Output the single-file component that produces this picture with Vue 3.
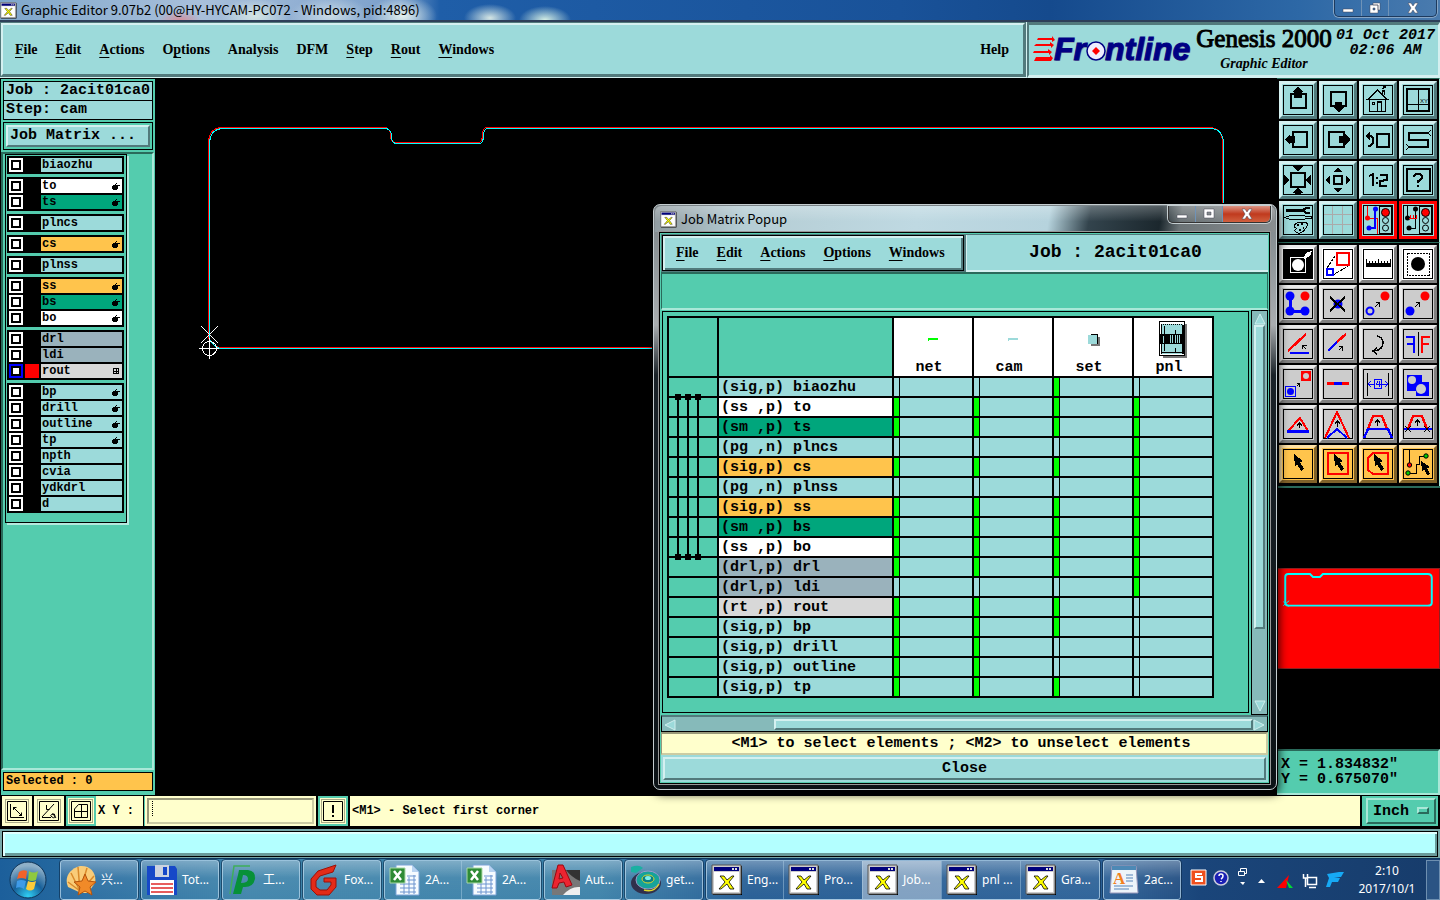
<script setup>
import { ref } from "vue";

const menus = [
  { label: "File", key: 0 },
  { label: "Edit", key: 0 },
  { label: "Actions", key: 0 },
  { label: "Options", key: 1 },
  { label: "Analysis", key: -1 },
  { label: "DFM", key: -1 },
  { label: "Step", key: 0 },
  { label: "Rout", key: 0 },
  { label: "Windows", key: 0 },
];

const popupMenus = ["File", "Edit", "Actions", "Options", "Windows"];

// layer groups of the side list, mark is the small sign at the right
const layerGroups = [
  [{ name: "biaozhu", tone: "signal" }],
  [
    { name: "to", tone: "silk", mark: "hand" },
    { name: "ts", tone: "mask", mark: "hand" },
  ],
  [{ name: "plncs", tone: "signal" }],
  [{ name: "cs", tone: "outer", mark: "hand" }],
  [{ name: "plnss", tone: "signal" }],
  [
    { name: "ss", tone: "outer", mark: "hand" },
    { name: "bs", tone: "mask", mark: "hand" },
    { name: "bo", tone: "silk", mark: "hand" },
  ],
  [
    { name: "drl", tone: "drill" },
    { name: "ldi", tone: "drill" },
    { name: "rout", tone: "rout", mark: "grid", active: true },
  ],
  [
    { name: "bp", tone: "signal", mark: "hand" },
    { name: "drill", tone: "signal", mark: "hand" },
    { name: "outline", tone: "signal", mark: "hand" },
    { name: "tp", tone: "signal", mark: "hand" },
    { name: "npth", tone: "signal" },
    { name: "cvia", tone: "signal" },
    { name: "ydkdrl", tone: "signal" },
    { name: "d", tone: "signal" },
  ],
];

const steps = ["net", "cam", "set", "pnl"];

// has: one flag for each step
const matrix = [
  { type: "(sig,p)", name: "biaozhu", tone: "signal", has: [0, 0, 1, 0] },
  { type: "(ss ,p)", name: "to", tone: "silk", has: [1, 1, 1, 1] },
  { type: "(sm ,p)", name: "ts", tone: "mask", has: [1, 1, 1, 1] },
  { type: "(pg ,n)", name: "plncs", tone: "signal", has: [0, 0, 0, 1] },
  { type: "(sig,p)", name: "cs", tone: "outer", has: [1, 1, 1, 1] },
  { type: "(pg ,n)", name: "plnss", tone: "signal", has: [0, 0, 0, 1] },
  { type: "(sig,p)", name: "ss", tone: "outer", has: [1, 1, 1, 1] },
  { type: "(sm ,p)", name: "bs", tone: "mask", has: [1, 1, 1, 1] },
  { type: "(ss ,p)", name: "bo", tone: "silk", has: [1, 1, 1, 1] },
  { type: "(drl,p)", name: "drl", tone: "drill", has: [1, 1, 1, 1] },
  { type: "(drl,p)", name: "ldi", tone: "drill", has: [0, 0, 0, 1] },
  { type: "(rt ,p)", name: "rout", tone: "rout", has: [1, 1, 1, 0] },
  { type: "(sig,p)", name: "bp", tone: "signal", has: [1, 1, 1, 0] },
  { type: "(sig,p)", name: "drill", tone: "signal", has: [1, 1, 0, 0] },
  { type: "(sig,p)", name: "outline", tone: "signal", has: [1, 1, 0, 0] },
  { type: "(sig,p)", name: "tp", tone: "signal", has: [1, 1, 1, 0] },
];

// board contour, drawn once per colour
const contour =
  "M54.500 262V64q1-12 12-13.500h163q7 0 7 8t7 7h80q5 0 5-8t6-7h722q11 1 12 14v198q-1 8-11 8H66q-5 0-11-8";

const light = `<path d="M16.500 1.500h12v27h-12z" fill="none" stroke="#000"/><circle cx="22.500" cy="7.500" r="4" fill="red" stroke="#000"/><circle cx="22.500" cy="15.500" r="3" fill="none" stroke="#000"/><circle cx="22.500" cy="23" r="3" fill="none" stroke="#000"/>`;
const cursor = `<path d="M11 5l9 7-3 1 4 7-3 2-4-7-2 3z"/>`;
const k = `fill="none" stroke="#000"`;

const viewTools = [
  { name: "Pan up", art: `<path d="M8 9h15v14H8z" ${k} stroke-width="2"/><path d="M15 2l6 5h-2v6h-8V7H9z"/>` },
  { name: "Pan down", art: `<path d="M8 7h15v14H8z" ${k} stroke-width="2"/><path d="M12 17h7v5h2l-5 5h-1l-5-5h2z"/>` },
  { name: "Home", art: `<path d="M4.500 14.500L14.500 5l10 9.500zM6.500 14.500v12h16v-12M14.500 26v-9h4v9M9.500 17.500h2v2h-2zM19.500 9V6h2v4M20 4l1-2h2" ${k} stroke-width="1.4"/>` },
  { name: "Zoom XY", art: `<path d="M4 4h22v22H4z" ${k} stroke-width="2"/><path d="M15.500 4v22M4 19.500h22" ${k}/><text x="17" y="18" font-size="6" font-family="Liberation Sans">XY</text>` },
  { name: "Pan left", art: `<path d="M10 7h14v15H10z" ${k} stroke-width="2"/><path d="M2 14l5-5v2h5v7H7v2l-5-5z"/>` },
  { name: "Pan right", art: `<path d="M6 7h15v15H6z" ${k} stroke-width="2"/><path d="M27 14l-5-5v2h-6v7h6v2l5-5z"/>` },
  { name: "Previous view", art: `<path d="M14 9h12v13H14z" ${k} stroke-width="2"/><path d="M5 11h3q2 1 2 4v2q-1 4-5 4" ${k} stroke-width="2.4"/><path d="M2 11l5-4v8z"/>` },
  { name: "Serpentine", art: `<path d="M25 8H6v7h19v7H6" ${k} stroke-width="2"/><path d="M28 5l-3 3 3 3M3 19l3 3-3 3" ${k}/>` },
  { name: "Zoom in", art: `<path d="M8 8h14v14H8z" ${k} stroke-width="2"/><path d="M9 1h3l3-1 3 1h3l-6 5zM9 28l6-5 6 5-6 1zM1 9v12l5-6zM28 9v12l-5-6z"/>` },
  { name: "Zoom out", art: `<path d="M11 11h8v8h-8z" ${k} stroke-width="2"/><path d="M15 3l5 4H10zM15 27l5-4H10zM3 15l4-5v10zM27 15l-4-5v10z"/>` },
  { name: "Scale one to two", art: `<path d="M6 11l4-2v12M14 12v2M14 17v2M17 10h7v5l-7 1v5h7" ${k} stroke-width="2"/>` },
  { name: "Help on tool", art: `<path d="M4 4h23v22H4z" ${k} stroke-width="2"/><path d="M11 12q0-3 4-3t4 3q0 3-4 4v2M15 20v2" ${k} stroke-width="2"/>` },
  { name: "Options", art: `<path d="M3 5h17" ${k} stroke-width="3"/><path d="M27 3h-4l-3 2 3 3h4" ${k} stroke-width="2"/><path d="M2 12.500l5-2h14l2 1h5v2h-5l-2 1H7z" ${k}/><path d="M11 22q0-5 8-5t4 6-8 5-3-3q3-2-1-3z" ${k}/><path d="M14 20h2M18 19h2M20 23h1M16 25h2" ${k} stroke-width="2"/>` },
  { name: "Grid", art: `<path d="M9.500 1v28M19.500 1v28M1 9.500h28M1 19.500h28" fill="none" stroke="#aaa"/>` },
  { name: "Net check", tone: "alert", art: `<path d="M4.500 1v12h10v16" fill="none" stroke="red"/><circle cx="4.500" cy="13" r="2.500" fill="red"/><path d="M12 4v19H6" fill="none" stroke="#00f" stroke-width="1.4"/><circle cx="12.500" cy="4" r="2.500" fill="#00f"/><circle cx="6" cy="23" r="2.500" fill="#00f"/>${light}` },
  { name: "Connection check", tone: "alert", art: `<path d="M4.500 1v12M12.500 4v19H6" ${k}/><circle cx="4.500" cy="13" r="2.500"/><circle cx="12.500" cy="4" r="2.500"/><circle cx="6" cy="23" r="2.500"/><path d="M6 13.500h8M7.500 13v-3M10.500 13v-3M13.500 13v-3" fill="none" stroke="red"/>${light}` },
];

const editTools = [
  { name: "Feature zoom", tone: "bright", art: `<path d="M0 0h30v30H0z"/><path d="M7.500 8.500h15v15h-15z" fill="none" stroke="#fff"/><circle cx="15" cy="16" r="6" fill="#fff"/><path d="M20 9l4-6 5-1-2 5-5 3z" fill="#fff"/>` },
  { name: "Scale", tone: "bright", art: `<path d="M4 19L14 4M10 26l17-10" ${k} stroke-dasharray="3 1"/><path d="M14 4h12v12H14z" fill="none" stroke="red" stroke-width="2"/><path d="M4 20h6v6H4z" fill="none" stroke="#00f" stroke-width="2"/>` },
  { name: "Measure", tone: "bright", art: `<path d="M3 14h25v4H3z"/><path d="M3.500 14v-4M6.500 14v-2M9.500 14v-2M12.500 14v-2M15.500 14v-4M18.500 14v-2M21.500 14v-2M24.500 14v-2M27.500 14v-4" ${k}/>` },
  { name: "Select shape", tone: "bright", art: `<path d="M4.500 4.500h22v22h-22z" ${k} stroke-dasharray="2 1"/><circle cx="15" cy="15" r="7"/>` },
  { name: "Chain", art: `<path d="M7 7v15h15" fill="none" stroke="#00f" stroke-width="3"/><circle cx="7" cy="7" r="4.500" fill="#00f"/><circle cx="7" cy="22" r="4.500" fill="#00f"/><circle cx="22" cy="22" r="4.500" fill="#00f"/><circle cx="22" cy="7" r="4.500" fill="red"/>` },
  { name: "Delete", art: `<circle cx="15" cy="15" r="4.500" fill="#00f"/><path d="M7 8l15 14M22 8L7 22" ${k} stroke-width="2"/>` },
  { name: "Move", art: `<circle cx="7" cy="22" r="3.500" fill="none" stroke="#00f" stroke-width="2"/><circle cx="22" cy="7" r="4.500" fill="red"/><path d="M12 18l5-5M13 13.500h3.500v4" ${k}/>` },
  { name: "Copy", art: `<circle cx="7" cy="22" r="4.500" fill="#00f"/><circle cx="22" cy="7" r="4.500" fill="red"/><path d="M12 18l5-5M13 13.500h3.500v4" ${k}/>` },
  { name: "Rotate line", art: `<path d="M5 22L23 5" stroke="red" stroke-width="2.400"/><path d="M7 24h19" stroke="#00f" stroke-width="2"/><path d="M23 20l-3-3M19.500 20v-3.500h4" ${k}/>` },
  { name: "Extend line", art: `<path d="M5 22l9-9" stroke="#00f" stroke-width="2.400"/><path d="M14 13l9-8" stroke="red" stroke-width="2.400"/><path d="M16 21l4-4M16 17.500h3.500v4" ${k}/>` },
  { name: "Rotate", art: `<path d="M14 7q6 1 6 7 0 7-9 8M14 19l-4 3 4 3" ${k} stroke-width="1.500"/>` },
  { name: "Mirror", art: `<path d="M3 8h8v16M4 15h7" fill="none" stroke="#00f" stroke-width="2"/><path d="M27 8h-8v16M26 15h-7" fill="none" stroke="red" stroke-width="2"/><path d="M15.500 3v24" ${k}/>` },
  { name: "Replace", art: `<path d="M18 2h10v10H18z" fill="red"/><circle cx="23" cy="7" r="3" fill="#ccc"/><path d="M2.500 17.500h10v10h-10z" fill="none" stroke="#00f"/><circle cx="7.500" cy="22.500" r="3.500" fill="#00f"/><path d="M14 17l3-3M14 14.500h2.500v3" ${k}/>` },
  { name: "Break", art: `<path d="M4 14.500h22" stroke="red" stroke-width="3"/><path d="M11 14.500h8" stroke="#00f" stroke-width="3"/>` },
  { name: "Spacing", art: `<path d="M4.500 4v23M25.500 4v23" ${k}/><path d="M11.500 10.500h7v9h-7zM5 15.500h6M19 15.500h6M8 12l-3 3 3 3M22 12l3 3-3 3M14.500 12l-1 3.500h4M16.500 12v6" fill="none" stroke="#00f"/>` },
  { name: "Merge", art: `<path d="M4 6h15v7h7v14H13v-5H4z" fill="#00f"/><circle cx="9" cy="11" r="4" fill="#ccc"/><circle cx="18" cy="20" r="5" fill="#ccc"/>` },
  { name: "Move triangle", art: `<path d="M5 22L17 9l8 13" fill="none" stroke="red" stroke-width="2"/><path d="M4 22.500h22" stroke="#00f" stroke-width="3"/><path d="M16.500 19v-5M14 16.500l2.500-2.500 2.500 2.500" ${k}/>` },
  { name: "Move corner", art: `<path d="M2 29L14 3l12 26" fill="none" stroke="red" stroke-width="2"/><path d="M4 29l10-9 10 9" fill="none" stroke="#00f" stroke-width="2"/><path d="M14.500 18v-6M12 14.500l2.500-2.500 2.500 2.500" ${k} stroke-width="1.400"/>` },
  { name: "Move segment", art: `<path d="M5 20l5-13h9l5 13" fill="none" stroke="red" stroke-width="2.400"/><path d="M1 29l4-9h20l4 9" fill="none" stroke="#00f" stroke-width="2.400"/><path d="M14.500 17v-6M12 13.500l2.500-2.500 2.500 2.500" ${k} stroke-width="1.400"/>` },
  { name: "Trim segment", art: `<path d="M5 20l5-13h9l5 13" fill="none" stroke="red" stroke-width="2.400"/><path d="M1 20h28" stroke="#00f" stroke-width="2"/><path d="M14.500 17v-6M12 13.500l2.500-2.500 2.500 2.500M2 17l6 6M8 17l-6 6M21 17l6 6M27 17l-6 6" ${k}/>` },
  { name: "Select", tone: "pick", art: cursor },
  { name: "Select by frame", tone: "pick", art: `<path d="M5 4h20v21H5z" fill="none" stroke="red" stroke-width="2"/>${cursor}` },
  { name: "Select by polygon", tone: "pick", art: `<path d="M10 4h15v21H10l-5-4V9z" fill="none" stroke="red" stroke-width="2"/>${cursor}` },
  { name: "Select net", tone: "pick", art: `<path d="M6.500 1v14M5 24.500h8.500v-9h3v-8H23" ${k}/><circle cx="6.500" cy="16" r="2.200" fill="red" stroke="#000"/><circle cx="5" cy="24" r="2.200" fill="#0c0" stroke="#000"/><circle cx="23" cy="7" r="2.200" fill="#0c0" stroke="#000"/><path d="M18 12l9 6-3 1 3 6-3 1-3-6-2 2z"/>` },
];

const toolSets = [
  { id: "view", tools: viewTools },
  { id: "edit", tools: editTools },
];

const tasks = [
  [{ icon: "shell", label: "兴..." }],
  [{ icon: "disk", label: "Tot..." }],
  [{ icon: "green-p", label: "工..." }],
  [{ icon: "foxit", label: "Fox..." }],
  [{ icon: "sheet", label: "2A..." }, { icon: "sheet", label: "2A..." }],
  [{ icon: "cad", label: "Aut..." }],
  [{ icon: "disc", label: "get..." }],
  [
    { icon: "xwin", label: "Eng..." },
    { icon: "xwin", label: "Pro..." },
    { icon: "xwin", label: "Job...", on: true },
    { icon: "xwin", label: "pnl ..." },
    { icon: "xwin", label: "Gra..." },
  ],
  [{ icon: "note", label: "2ac..." }],
];

const coords = ref("");
const unit = ref("Inch");
</script>

<template>
  <div class="desktop">
    <!-- shared icons -->
    <svg class="defs" width="0" height="0" aria-hidden="true">
      <symbol id="xwin" viewBox="0 0 32 32">
        <path d="M2 2h29v29H2z" fill="#000" />
        <path d="M1 1h29v29H1z" fill="#ccc" stroke="#555" />
        <path d="M3 3h25v4H3z" fill="#00007c" />
        <path d="M21 4h2v2h-2zM24 4h2v2h-2z" fill="#ddd" />
        <path d="M3 8h25v20H3z" fill="#fff" />
        <path d="M9 12h4l3 4 5-4h2l-5 6 5 7h-4l-3-5-6 5H8l6-7z" fill="#ff0" stroke="#000" stroke-width="0.8" />
      </symbol>
      <symbol id="shell" viewBox="0 0 32 32">
        <path d="M16 29L3 23C-1 14 4 5 15 2c11-1 17 8 15 17l-7 10z" fill="#f9cc78" />
        <path d="M15 27L3 18M15 27L6 9M15 27L13 3M15 27L22 4M16 27L29 12" stroke="#d98a2b" stroke-width="1.5" />
        <path d="M20 10l3 7 8 1-6 5 2 8-7-4-7 4 2-8-6-5 8-1z" fill="#f18a28" stroke="#b4530d" />
      </symbol>
      <symbol id="disk" viewBox="0 0 32 32">
        <path d="M1 2h28l2 3v26H1z" fill="#1648c8" />
        <path d="M9 1h14v12H9z" fill="#ccd3df" />
        <path d="M17 3h4v8h-4z" fill="#1648c8" />
        <path d="M4 16h24v15H4z" fill="#fff" />
        <path d="M5 20h22M5 24h22M5 28h22" stroke="#e02828" stroke-width="1.5" />
      </symbol>
      <symbol id="green-p" viewBox="0 0 32 32">
        <path d="M23 2H7L3 30" stroke="#3fae5a" stroke-width="1.5" fill="none" />
        <path d="M12 6h9q8 1 7 9-2 9-12 8l-2 7H6l5-19h5l-2 8q7 0 7-4t-5-4h-5z" fill="#079138" />
      </symbol>
      <symbol id="foxit" viewBox="0 0 32 32">
        <path d="M28 1L10 7 3 15v10l6 6h12l7-8V14H16v4h7v3l-4 5h-7l-4-3v-6l4-5 13-4z" fill="#e32b18" stroke="#9c1108" />
      </symbol>
      <symbol id="sheet" viewBox="0 0 32 32">
        <path d="M7 1h16l7 7v23H7z" fill="#f6fbff" stroke="#7ca4d8" />
        <path d="M23 1v7h7z" fill="#b9d3f1" />
        <path d="M11 20h16M11 24h16M11 28h16M15 17v13M20 13v17M25 11v19M18 12h9M18 16h9" stroke="#6c94cf" />
        <path d="M1 4h15v15H1z" fill="#2f8b36" stroke="#a9d9a4" />
        <path d="M5 7l7 9M12 7l-7 9" stroke="#fff" stroke-width="2.5" />
      </symbol>
      <symbol id="cad" viewBox="0 0 32 32">
        <path d="M3 6h28v25H3z" fill="#777" />
        <path d="M17 6h14v11q-9-4-14-11z" fill="#333" />
        <path d="M14 31h17v-8q-9-1-17 8z" fill="#eee" />
        <path d="M9 1h5l9 20-6 2-2-5-5 1-2 5H3zM11 9l-1 6 4-1z" fill="#ec2430" fill-rule="evenodd" stroke="#9a0810" />
      </symbol>
      <symbol id="disc" viewBox="0 0 32 32">
        <ellipse cx="16" cy="19" rx="15" ry="11" fill="#30304c" />
        <ellipse cx="18" cy="16" rx="12" ry="9" fill="#16a39a" stroke="#99c" />
        <ellipse cx="18" cy="15" rx="6" ry="4" fill="#0c7d84" stroke="#e0d62c" />
        <ellipse cx="18" cy="14" rx="3" ry="2" fill="#7df0ea" />
        <path d="M1 3q8-3 12 1l-7 5-5-1z" fill="#1bb0a2" />
        <path d="M14 26q10 3 15-6" stroke="#e0d62c" stroke-width="1.5" fill="none" />
      </symbol>
      <symbol id="hand" viewBox="0 0 8 8">
        <path d="M0 4h1V3h2V2h1V1h1v1h-1v1h4v1H6v3H5v1H1V7H0z" />
      </symbol>
      <symbol id="grid" viewBox="0 0 8 8">
        <path d="M1.500 1.500h5v5h-5zM4 1v6M1 4h6" fill="none" stroke="#000" />
      </symbol>
    </svg>

    <header class="title-bar">
      <svg class="title-icon"><use href="#xwin" /></svg>
      <h1>Graphic Editor 9.07b2 (00@HY-HYCAM-PC072 - Windows, pid:4896)</h1>
      <div class="window-buttons">
        <button aria-label="Minimize"><svg width="12" height="12"><path d="M1 7h10v3H1z" /></svg></button>
        <button aria-label="Restore"><svg width="12" height="12"><path d="M4 1h7v7h-2V3H4zM1 3h8v8H1zM4 6v2h2V6z" fill-rule="evenodd" /></svg></button>
        <button class="close" aria-label="Close window"><svg width="12" height="12"><path d="M1 1h3l2 3 2-3h3L8 6l3 5H8L6 8l-2 3H1l3-5z" /></svg></button>
      </div>
    </header>

    <div class="menu-row">
      <nav class="menu-bar">
        <button v-for="m in menus" :key="m.label">
          <template v-if="m.key < 0">{{ m.label }}</template>
          <template v-else>{{ m.label.slice(0, m.key) }}<u>{{ m.label[m.key] }}</u>{{ m.label.slice(m.key + 1) }}</template>
        </button>
        <button class="help">Help</button>
      </nav>
      <div class="brand">
        <svg class="logo" viewBox="0 0 162 40" role="img" aria-label="Frontline">
          <path d="M5 9h14V7l3 4-3 2v-2H4zM3 15h14v-2l4 3-3 3v-2H1zM1 22h14v-2l4 3-3 3v-2H0zM3 28h14v-2l3 3-2 3H1z" fill="red" />
          <g font-family="Liberation Sans" font-weight="bold" font-style="italic" font-size="32">
            <text x="22" y="32" fill="#889">Fr</text>
            <text x="73" y="32" fill="#889">ntline</text>
            <text x="21" y="31" fill="#000084" stroke="#000084">Fr</text>
            <text x="72" y="31" fill="#000084" stroke="#000084">ntline</text>
          </g>
          <circle cx="63" cy="22" r="9" fill="#eef" stroke="#000084" stroke-width="1.5" />
          <path d="M63 18l4 4-4 4-4-4z" fill="red" />
        </svg>
        <div class="product">
          <strong>Genesis 2000</strong>
          <em>Graphic Editor</em>
        </div>
        <div class="stamp">01 Oct 2017<br />02:06 AM</div>
      </div>
    </div>

    <main class="work">
      <aside class="side">
        <div class="job-info">
          <div>Job : 2acit01ca0</div>
          <div>Step: cam</div>
        </div>
        <div class="matrix-frame"><button>Job Matrix ...</button></div>
        <div class="layer-well">
          <div class="layer-list">
            <div v-for="(group, g) in layerGroups" :key="g" class="layer-group">
              <label v-for="layer in group" :key="layer.name" class="layer">
                <input type="checkbox" :class="{ active: layer.active }" />
                <span class="swatch" :class="{ active: layer.active }"></span>
                <span class="layer-name" :class="layer.tone">
                  {{ layer.name }}
                  <svg v-if="layer.mark" width="8" height="8"><use :href="'#' + layer.mark" /></svg>
                </span>
              </label>
            </div>
          </div>
        </div>
        <div class="selected">Selected : 0</div>
      </aside>

      <section class="canvas">
        <svg width="1122" height="320" fill="none" shape-rendering="crispEdges">
          <path :d="contour" stroke="red" transform="translate(-1 -1)" />
          <path :d="contour" stroke="#0ff" />
          <path d="M46 248l17 17M63 248l-17 17M44 270.500h20M54.500 260v21" stroke="#fff" />
          <circle cx="54.500" cy="270.500" r="7" stroke="#fff" />
        </svg>
      </section>

      <aside class="tools">
        <div v-for="set in toolSets" :key="set.id" class="tool-set">
          <button v-for="tool in set.tools" :key="tool.name" :class="[set.id, tool.tone]" :aria-label="tool.name">
            <svg viewBox="0 0 30 30" v-html="tool.art"></svg>
          </button>
        </div>
        <div class="overview">
          <div class="overview-view">
            <svg viewBox="0 0 162 100" fill="none" stroke="#0ff" stroke-width="2">
              <path d="M7 34V8q0-3 3-3h22l3 3h7l3-3h106q4 0 4 4v25q0 3-4 3H11q-4 0-4-3z" />
              <path d="M5 33l6 5M11 32l-6 5" stroke-width="1" />
            </svg>
          </div>
        </div>
        <div class="position">X = 1.834832"<br />Y = 0.675070"</div>
      </aside>
    </main>

    <div class="command-row">
      <button class="mode" aria-label="Diagonal">
        <svg viewBox="0 0 20 20"><path d="M.5.5h19v19H.5zM3.500 3v13.500H17M6 6l9 9M6.500 9V6.500h3M12 14.500h2.500v-3" /></svg>
      </button>
      <button class="mode" aria-label="Angle">
        <svg viewBox="0 0 20 20"><path d="M.5.5h19v19H.5zM3 16L15 3M3 16.500h9M7.500 4v4.500h3M13 13q3-1 3 2t-3 1 1-3l3 4" /></svg>
      </button>
      <button class="mode green" aria-label="Snap grid">
        <svg viewBox="0 0 20 20"><path d="M.5.5h19v19H.5zM3.500 8l4-4.500h9v13h-13zM10.500 3v14M3 10.500h14" /></svg>
      </button>
      <label class="xy" for="coords">X Y :</label>
      <div class="xy-box"><input id="coords" v-model="coords" type="text" /><i></i></div>
      <button class="mode green" aria-label="Alert">
        <svg viewBox="0 0 20 20"><path d="M.5.5h19v19H.5z" /><path d="M10 4v8M10 14v2" stroke-width="2" /></svg>
      </button>
      <div class="prompt">&lt;M1&gt; - Select first corner</div>
      <div class="unit">
        <select v-model="unit" aria-label="Unit">
          <option>Inch</option>
        </select>
        <i></i>
      </div>
    </div>
    <div class="status-row"><div class="status"></div></div>

    <footer class="taskbar">
      <button class="start" aria-label="Start">
        <svg viewBox="0 0 40 40">
          <defs>
            <radialGradient id="orb" cx="50%" cy="95%" r="85%">
              <stop offset="0" stop-color="#2fd0f5" />
              <stop offset="0.5" stop-color="#17609a" />
              <stop offset="1" stop-color="#8fb0c8" />
            </radialGradient>
          </defs>
          <circle cx="20" cy="20" r="18" fill="url(#orb)" stroke="#0e3357" />
          <path d="M11 12q4-3 8-1l-1 8q-5-2-9 0z" fill="#f2622a" />
          <path d="M21 11q5 3 9 0l-2 9q-4 2-8 0z" fill="#8fc93f" />
          <path d="M9 21q4-2 9 0l-2 8q-4-3-8-1z" fill="#3f9be8" />
          <path d="M20 21q4 2 8 0l-2 8q-4 3-8 0z" fill="#fbcb3a" />
        </svg>
      </button>
      <div v-for="(group, g) in tasks" :key="g" class="task-group">
        <button v-for="(task, i) in group" :key="i" :class="{ on: task.on }">
          <svg v-if="task.icon === 'note'" viewBox="0 0 32 32">
            <path d="M4 2h24l2 27H2z" fill="#edf4fa" stroke="#99b" />
            <path d="M4 2h24v4H4z" fill="#4d89b5" />
            <text x="5" y="20" font-family="Liberation Serif" font-weight="bold" font-size="17" fill="#f2801d">A</text>
            <path d="M18 11h7M18 14h7M18 17h7M6 22h19M6 25h15" stroke="#5683b8" />
          </svg>
          <svg v-else><use :href="'#' + task.icon" /></svg>{{ task.label }}
        </button>
      </div>
      <div class="tray">
        <svg width="158" height="28" viewBox="0 0 158 28">
          <path d="M1 4h15v15H1z" fill="#f0501e" stroke="#fff" />
          <path d="M12 8H6v3h6v4H5" stroke="#fff" stroke-width="2" fill="none" />
          <circle cx="31" cy="12" r="7" fill="#1a1fb4" stroke="#ccd" stroke-width="1.500" />
          <path d="M29 10q0-2 2-2t2 2-2 3M31 15v1" stroke="#fff" stroke-width="1.500" fill="none" />
          <path d="M50.500 5.500v-3h6v5h-2M48.500 5.500h6v4h-6z" fill="none" stroke="#fff" />
          <path d="M50 16h5l-2 3zM68 17l3.500-4 3.500 4z" fill="#fff" />
          <path d="M87 22L99 9l-3 13z" fill="red" />
          <path d="M96 14l7 8h-4z" fill="#0d3" />
          <path d="M117.500 11.500h9v7h-9zM119 21.500h7M113.500 8v4h4V8M115.500 12v9" fill="none" stroke="#fff" stroke-width="1.500" />
          <path d="M137 8l12-2h5l-3 5h-7l6 1-2 4h-6l-2 5h-4l3-9z" fill="#16a9f5" />
        </svg>
        <time>2:10<br />2017/10/1</time>
        <button class="peek" aria-label="Show desktop"></button>
      </div>
    </footer>

    <section class="popup" aria-label="Job Matrix Popup">
      <header class="popup-title">
        <svg class="title-icon"><use href="#xwin" /></svg>
        <h2>Job Matrix Popup</h2>
        <div class="window-buttons">
          <button aria-label="Minimize popup"><svg width="12" height="12"><path d="M1 7h10v3H1z" /></svg></button>
          <button aria-label="Maximize popup"><svg width="12" height="12"><path d="M1 1h10v9H1zM4 4v3h4V4z" fill-rule="evenodd" /></svg></button>
          <button class="close red" aria-label="Close popup"><svg width="12" height="12"><path d="M1 1h3l2 3 2-3h3L8 6l3 5H8L6 8l-2 3H1l3-5z" /></svg></button>
        </div>
      </header>
      <div class="popup-body">
        <div class="popup-head">
          <nav class="popup-menu">
            <button v-for="name in popupMenus" :key="name"><u>{{ name[0] }}</u>{{ name.slice(1) }}</button>
          </nav>
          <div class="popup-job">Job : 2acit01ca0</div>
        </div>
        <div class="popup-strip"></div>
        <div class="matrix-area">
          <div class="matrix-pane">
            <table class="matrix">
              <colgroup>
                <col class="c-drill" /><col class="c-name" />
                <col v-for="s in steps" :key="s" class="c-step" />
              </colgroup>
              <thead>
                <tr>
                  <td></td>
                  <td></td>
                  <th v-for="s in steps" :key="s" scope="col">
                    <svg width="40" height="42" shape-rendering="crispEdges">
                      <path v-if="s === 'net'" d="M15 20h10v2H16v1h-1z" fill="#0f0" />
                      <path v-else-if="s === 'cam'" d="M15 20h10v2H16v1h-1z" fill="#9cdada" />
                      <g v-else-if="s === 'set'">
                        <path d="M18 19h9v9h-9z" fill="#777" />
                        <path d="M15 17h9v9h-9z" fill="#9cdada" />
                        <path d="M18 16.500h6.500V26" fill="none" stroke="#000" />
                      </g>
                      <g v-else>
                        <path d="M10 6h24v34H10z" fill="#777" />
                        <path d="M6.500 3.500h25v34h-25z" fill="#fff" stroke="#000" />
                        <path d="M8 6h22v30H8z" fill="#9cdada" />
                        <path d="M7 16h24v10H7zM8 7h1v29H8zM29 7h2v29h-2z" />
                        <path d="M8 6.500h22" stroke="#000" stroke-dasharray="1 1" />
                        <path d="M10.500 18v7M17.500 17v8M19.500 17v8M22.500 17v8M24.500 17v8M26.500 17v8" stroke="#9cdada" />
                        <path d="M11.500 8v8M22.500 12v4M11.500 26v7M22.500 30v4M8 34.500h22" stroke="#000" />
                      </g>
                    </svg>
                    <span>{{ s }}</span>
                  </th>
                </tr>
              </thead>
              <tbody>
                <tr v-for="row in matrix" :key="row.name">
                  <td></td>
                  <th scope="row" :class="row.tone">{{ row.type }} {{ row.name }}</th>
                  <td v-for="(on, i) in row.has" :key="i" class="cell"><i :class="{ on }"></i></td>
                </tr>
              </tbody>
            </table>
            <!-- drill spans over the layer rows -->
            <svg class="spans" width="26" height="166" shape-rendering="crispEdges">
              <path d="M3 3v160M13 3v160M23 3v160" stroke="#000" stroke-width="2" />
              <path d="M0 0h6v6H0zM10 0h6v6h-6zM20 0h6v6h-6zM0 160h6v6H0zM10 160h6v6h-6zM20 160h6v6h-6z" />
            </svg>
          </div>
          <div class="v-scroll">
            <svg width="12" height="12"><path d="M6 1l5 10H1z" fill="#9cdada" stroke="#cfeeee" /></svg>
            <div class="track"><span></span></div>
            <svg width="12" height="12"><path d="M1 1h10L6 11z" fill="#9cdada" stroke="#cfeeee" /></svg>
          </div>
        </div>
        <div class="h-scroll">
          <svg width="12" height="12"><path d="M1 6l10-5v10z" fill="#9cdada" stroke="#cfeeee" /></svg>
          <div class="track"><span></span></div>
          <svg width="12" height="12"><path d="M1 1l10 5-10 5z" fill="#9cdada" stroke="#cfeeee" /></svg>
        </div>
        <div class="popup-hint">&lt;M1&gt; to select elements ; &lt;M2&gt; to unselect elements</div>
        <div class="popup-foot"><button>Close</button></div>
      </div>
    </section>
  </div>
</template>

<style>
body {
  margin: 0;
  overflow: hidden;
  background: #000;
}
</style>

<style scoped>
.desktop {
  --aqua: #9cdada;
  --aqua-light: #d4f0f0;
  --aqua-dark: #527a7c;
  --green: #54ccae;
  --green-light: #a9e8d8;
  --green-dark: #2a6a5b;
  --cream: #ffffcc;
  --orange: #ffc44c;
  position: relative;
  display: flex;
  flex-direction: column;
  height: 100vh;
  color: #000;
  font-family: "Liberation Mono", monospace;
}

.desktop *,
.desktop *::before {
  box-sizing: border-box;
}

.defs {
  position: absolute;
}

button,
select,
input {
  margin: 0;
  padding: 0;
  border: 0;
  border-radius: 0;
  background: none;
  color: inherit;
  font: inherit;
}

h1,
h2 {
  margin: 0;
  font-weight: normal;
}

.signal { background: var(--aqua); }
.silk { background: #fff; }
.mask { background: #00a67c; }
.outer { background: var(--orange); }
.drill { background: #9ab2bc; }
.rout { background: #d8d8d8; }

/* main window title */
.title-bar {
  display: flex;
  align-items: center;
  height: 22px;
  gap: 4px;
  border-bottom: 2px solid #2d3f58;
  background:
    radial-gradient(ellipse 26px 14px at 545px 20px, #d5efe4, transparent),
    radial-gradient(ellipse 26px 14px at 490px 18px, #d5e6e4, transparent),
    radial-gradient(ellipse 34px 20px at 403px 16px, #e4f1ee, transparent),
    radial-gradient(ellipse 40px 20px at 330px 16px, #c9dbe6, transparent),
    radial-gradient(ellipse 34px 18px at 255px 16px, #d5e6e4, transparent),
    radial-gradient(ellipse 22px 9px at 180px 20px, #d58f9c, transparent),
    linear-gradient(90deg, #7ea6cb 0, #a9c0db 200px, #7a9fcb 400px, #1f5ea8 440px, #195299 900px, #154a8d 1050px, #2d68a6 1300px, #4a7bae);
}

.title-bar h1,
.popup-title h2 {
  font: 13px/18px "Noto Sans CJK SC", "Open Sans", sans-serif;
}

.title-icon {
  width: 17px;
  height: 17px;
}

.window-buttons {
  display: flex;
  align-self: flex-start;
  height: 17px;
  margin-left: auto;
  margin-right: 3px;
  border: 1px solid #1d3a5e;
  border-top: 0;
  border-radius: 0 0 5px 5px;
  box-shadow: 0 0 0 1px #86a5c5;
}

.window-buttons button {
  width: 27px;
  line-height: 0;
  border-right: 1px solid #6f93b8;
}

.window-buttons .close {
  width: 47px;
  border-right: 0;
}

.window-buttons svg {
  fill: #fff;
  stroke: #445;
  stroke-width: 0.5px;
}

/* menu row */
.menu-row {
  display: flex;
  height: 56px;
  background: var(--aqua-light);
}

.menu-bar {
  display: flex;
  flex: 1;
  align-items: center;
  gap: 18px;
  margin: 1px 2px 2px 1px;
  padding: 1px 14px 0 12px;
  border: 2px solid var(--aqua-light);
  border-right-color: var(--aqua-dark);
  border-bottom-color: var(--aqua-dark);
  outline: 1px solid var(--aqua-dark);
  background: var(--aqua);
}

.menu-bar button,
.popup-menu button {
  font: bold 14px/18px "Liberation Serif", serif;
}

.menu-row u,
.popup-menu u {
  text-underline-offset: 3px;
}

.menu-bar .help {
  margin-left: auto;
}

.brand {
  display: flex;
  width: 413px;
  padding-left: 4px;
  border: 3px solid var(--aqua-dark);
  border-right: 2px solid var(--aqua-light);
  border-bottom-color: var(--aqua-light);
  border-left-width: 2px;
  background: var(--aqua);
}

.logo {
  width: 162px;
  height: 40px;
  margin-top: 4px;
}

.product {
  display: flex;
  flex-direction: column;
  align-items: center;
  width: 138px;
  font-family: "Liberation Serif", serif;
  white-space: nowrap;
}

.product strong {
  font-size: 25px;
  font-weight: normal;
  line-height: 27px;
  -webkit-text-stroke: 1px #000;
}

.product em {
  font-size: 14px;
  font-weight: bold;
  line-height: 24px;
}

.stamp {
  flex: 1;
  padding-top: 3px;
  font: italic bold 15px/15px "Liberation Mono", monospace;
  text-align: center;
  white-space: nowrap;
}

/* work area */
.work {
  display: flex;
  flex: 1;
  min-height: 0;
}

.side {
  display: flex;
  flex-direction: column;
  width: 155px;
  padding: 2px 2px 4px 2px;
  border-left: 1px solid #000;
  border-top: 1px solid #000;
  background: var(--green);
}

.job-info {
  border: 1px solid #000;
  background: var(--aqua);
  font: bold 15px/18px "Liberation Mono", monospace;
  white-space: nowrap;
}

.job-info div {
  height: 18px;
  padding-left: 2px;
}

.job-info div + div {
  height: 19px;
  border-top: 1px solid #000;
}

.matrix-frame {
  margin-top: 2px;
  padding: 2px;
  border: 1px solid #000;
}

.matrix-frame button {
  display: block;
  width: 100%;
  height: 22px;
  padding-left: 2px;
  border: 2px solid var(--aqua-light);
  border-right-color: var(--aqua-dark);
  border-bottom-color: var(--aqua-dark);
  background: var(--aqua);
  font: bold 15px/16px "Liberation Mono", monospace;
  text-align: left;
}

.layer-well {
  flex: 1;
  margin: 2px -1px 2px -2px;
  padding: 0 0 0 2px;
  border: 2px solid var(--green-dark);
  border-right-color: var(--green-light);
  border-bottom-color: var(--green-light);
}

.layer-list {
  display: flex;
  flex-direction: column;
  gap: 3px;
  width: 122px;
  padding: 1px 1px 9px 1px;
  border: 1px solid #000;
  box-shadow: 2px 2px 0 #b5e9de;
}

.layer-group {
  display: flex;
  flex-direction: column;
  gap: 2px;
  width: 117px;
  padding: 2px;
  background: #000;
}

.layer {
  display: flex;
  gap: 2px;
  height: 14px;
}

.layer input {
  width: 14px;
  height: 14px;
  border: 2px solid #fff;
  outline: 2px solid #000;
  outline-offset: -4px;
  background: #fff;
  appearance: none;
}

.layer input.active {
  border-color: #00f;
}

.swatch {
  width: 14px;
}

.swatch.active {
  background: red;
}

.layer-name {
  display: flex;
  flex: 1;
  align-items: center;
  justify-content: space-between;
  padding: 0 2px 0 1px;
  font-size: 12px;
  font-weight: bold;
  line-height: 13px;
}

.layer-name svg {
  shape-rendering: crispEdges;
}

.selected {
  height: 19px;
  padding-left: 2px;
  border: 1px solid #000;
  background: var(--orange);
  font-size: 12px;
  font-weight: bold;
  line-height: 17px;
}

.canvas {
  flex: 1;
  min-width: 0;
  overflow: hidden;
  background: #000;
}

/* right tools */
.tools {
  display: flex;
  flex-direction: column;
  width: 163px;
  background: #000;
}

.tool-set {
  display: grid;
  grid-template-columns: repeat(4, 38px);
  gap: 2px;
  padding: 2px 1px 3px 2px;
  border-right: 1px solid var(--green-light);
  border-top: 1px solid var(--green-dark);
}

.tool-set button {
  width: 38px;
  height: 38px;
  padding: 1px;
  border: 3px solid var(--aqua-light);
  border-right-color: var(--aqua-dark);
  border-bottom-color: var(--aqua-dark);
  background: var(--aqua);
  line-height: 0;
}

.tool-set svg {
  width: 30px;
  height: 30px;
  box-shadow: inset 0 0 0 1px #000;
  shape-rendering: crispEdges;
}

/* small dots turn square without smoothing */
.tool-set :deep(circle) {
  shape-rendering: auto;
}

.tool-set .edit {
  border-color: #ebebeb #808080 #808080 #ebebeb;
  background: #ccc;
}

.tool-set .bright {
  background: #fff;
}

.tool-set .pick {
  border-color: #ffe2a6 #80622a #80622a #ffe2a6;
  background: var(--orange);
}

.tool-set .alert {
  border-color: red;
}

.overview {
  display: flex;
  flex: 1;
  align-items: center;
  border-top: 2px solid var(--green-dark);
}

.overview-view {
  width: 100%;
  height: 101px;
  border: 1px solid #8c2020;
  background: red;
}

.overview-view svg {
  display: block;
  width: 100%;
  height: 99px;
}

.position {
  height: 46px;
  padding: 6px 0 0 4px;
  border: 2px solid var(--green-light);
  border-top-color: var(--green-dark);
  border-left: 0;
  background: var(--green);
  font-size: 15px;
  font-weight: bold;
  line-height: 15px;
  white-space: nowrap;
}

/* command row */
.command-row {
  display: flex;
  gap: 2px;
  height: 33px;
  padding: 1px 2px 2px 2px;
  background: #000;
}

.mode {
  width: 30px;
  padding: 2px 3px;
  border: 2px solid var(--cream);
  background: var(--cream);
  line-height: 0;
}

.mode svg {
  width: 20px;
  height: 20px;
  fill: none;
  stroke: #000;
  outline: 1px solid #aaaa88;
  outline-offset: 1px;
}

.mode.green {
  border-color: var(--green);
}

.xy {
  width: 47px;
  margin-left: -2px;
  padding-left: 2px;
  background: var(--cream);
  font-size: 12px;
  font-weight: bold;
  line-height: 30px;
}

.xy-box {
  position: relative;
  width: 172px;
  margin-left: -1px;
  padding: 2px;
  border-left: 1px solid var(--green);
  background: var(--cream);
}

.xy-box input {
  width: 100%;
  height: 26px;
  padding-left: 8px;
  border: 2px solid #99997a;
  border-right-color: #cccca3;
  border-bottom-color: #cccca3;
  background: var(--cream);
}

/* text caret */
.xy-box i {
  position: absolute;
  top: 5px;
  left: 7px;
  height: 15px;
  border-left: 1px dotted #000;
}

.prompt {
  flex: 1;
  padding-left: 2px;
  background: var(--cream);
  font-size: 12px;
  font-weight: bold;
  line-height: 30px;
}

.unit {
  position: relative;
  width: 76px;
  padding: 2px 2px 2px 4px;
  background: var(--green);
}

.unit select {
  width: 100%;
  height: 26px;
  padding-left: 5px;
  border: 2px solid var(--green-light);
  border-right-color: var(--green-dark);
  border-bottom-color: var(--green-dark);
  font-size: 15px;
  font-weight: bold;
  appearance: none;
}

.unit i {
  position: absolute;
  top: 11px;
  right: 9px;
  width: 12px;
  height: 7px;
  border: 2px solid var(--green-light);
  border-right-color: var(--green-dark);
  border-bottom-color: var(--green-dark);
}

.status-row {
  height: 30px;
  padding: 2px 2px 1px 2px;
  border-top: 1px solid #000;
  background: #79a9aa;
}

.status {
  height: 26px;
  border: 1px solid #000;
  background: #b3ffff;
  box-shadow: inset 2px 2px 0 #e0ffff, inset -2px -3px 0 #699a9a;
}

/* taskbar */
.taskbar {
  display: flex;
  align-items: center;
  height: 42px;
  padding-left: 8px;
  border-top: 1px solid #0f3760;
  background: linear-gradient(90deg, #1c5f9b 0, #3d83aa 250px, #3a80a8 600px, #235b93 750px, #2a6097 1100px, #1a457a 1200px, #173c6b);
  color: #fff;
  font: 12px/18px "Noto Sans", "Noto Sans CJK SC", sans-serif;
}

.start {
  width: 40px;
  height: 40px;
  margin-right: 12px;
}

.task-group {
  display: flex;
  height: 40px;
  margin-right: 3px;
  border: 1px solid rgba(190, 220, 240, 0.7);
  border-radius: 3px;
  outline: 1px solid rgba(10, 40, 70, 0.6);
  background: linear-gradient(rgba(255, 255, 255, 0.35), rgba(255, 255, 255, 0.08) 45%, rgba(255, 255, 255, 0.04));
}

.task-group button {
  display: flex;
  align-items: center;
  gap: 4px;
  width: 76px;
  padding-left: 4px;
  white-space: nowrap;
}

.task-group button + button {
  width: 79px;
  border-left: 1px solid rgba(190, 220, 240, 0.4);
}

.task-group .on {
  background: rgba(255, 255, 255, 0.4);
}

.task-group svg {
  width: 32px;
  height: 32px;
}

.tray {
  display: flex;
  flex: 1;
  align-items: center;
  justify-content: flex-end;
  height: 41px;
}

.tray time {
  width: 78px;
  text-align: center;
}

.peek {
  width: 14px;
  height: 40px;
  border: 1px solid #6e8fb0;
  background: #2b5484;
}

/* job matrix window */
.popup {
  position: absolute;
  top: 204px;
  right: 163px;
  width: 624px;
  padding: 1px 6px 5px 5px;
  border: 1px solid #c4cdd0;
  border-radius: 7px;
  background: linear-gradient(#7b8488, #a9adb0 120px, #1a2228 170px, #0c1216);
  box-shadow: 0 0 0 1px #000, 2px 4px 10px rgba(0, 0, 0, 0.8);
}

.popup-title {
  display: flex;
  align-items: center;
  gap: 4px;
  height: 26px;
  margin: 0 -5px 0 -4px;
  padding-left: 5px;
  border-radius: 6px 6px 0 0;
  background:
    linear-gradient(rgba(255, 255, 255, 0.25), transparent 60%),
    linear-gradient(100deg, #909ba0 0, #b5cdd4 90px, #bfd9e2 260px, #b6d3dd 390px, #33444d 430px, #1b272d 500px, #6b7376 520px, #8a8f91);
}

.popup-title .window-buttons {
  margin-right: 4px;
  border-color: #333;
  box-shadow: 0 0 0 1px #c4cdd0;
}

.popup-title .red {
  border-radius: 0 0 5px 0;
  background: linear-gradient(#dc9484, #c03a1e 50%, #d0603f);
}

.popup-body {
  padding: 1px;
  border: 1px solid #000;
  outline: 1px solid #999;
  background: var(--green);
}

.popup-head {
  display: flex;
  gap: 2px;
  height: 38px;
  background: var(--aqua-dark);
}

.popup-menu {
  display: flex;
  align-items: center;
  gap: 18px;
  width: 302px;
  margin: 1px 0 1px 1px;
  padding: 0 13px;
  border: 1px solid #000;
  background: var(--aqua);
  box-shadow: inset 2px 2px 0 var(--aqua-light), inset -2px -2px 0 var(--aqua-dark);
}

.popup-job {
  flex: 1;
  margin-top: 1px;
  padding-right: 4px;
  border-left: 1px solid var(--aqua-light);
  border-bottom: 2px solid var(--aqua-light);
  background: var(--aqua);
  font-size: 18px;
  font-weight: bold;
  line-height: 34px;
  text-align: center;
}

.popup-strip {
  height: 38px;
  border: 1px solid var(--green-dark);
  border-top-width: 2px;
  border-bottom: 2px solid var(--green-light);
}

.matrix-area {
  display: flex;
  height: 405px;
}

.matrix-pane {
  position: relative;
  flex: 1;
  margin: 1px 2px 2px 1px;
  padding: 4px;
  border: 1px solid #000;
}

.matrix {
  width: 547px;
  border-collapse: collapse;
  table-layout: fixed;
  font-size: 15px;
}

.c-drill { width: 50px; }
.c-name { width: 175px; }
.c-step { width: 80px; }

.matrix td,
.matrix th {
  height: 20px;
  padding: 0;
  border: 2px solid #000;
  font-weight: bold;
  line-height: 18px;
  text-align: left;
  white-space: pre;
}

.matrix tbody th {
  padding: 2px 0 0 2px;
  line-height: 16px;
}

.matrix thead th {
  height: 60px;
  background: #fff;
  text-align: center;
  line-height: 16px;
}

.matrix thead svg,
.matrix thead span {
  display: block;
  margin: 0 auto;
}

.matrix thead span {
  padding-right: 8px;
}

.matrix .cell {
  background: var(--aqua);
}

.cell i {
  display: block;
  width: 6px;
  height: 18px;
  border-right: 1px solid #000;
}

.cell i.on {
  background: #0f0;
}

.spans {
  position: absolute;
  top: 82px;
  left: 12px;
}

.v-scroll {
  display: flex;
  flex-direction: column;
  width: 17px;
  padding: 2px;
  border: 1px solid #000;
  background: #86baba;
}

.track {
  flex: 1;
}

.track span {
  display: block;
  border: 2px solid var(--aqua-light);
  border-right-color: var(--aqua-dark);
  border-bottom-color: var(--aqua-dark);
  background: var(--aqua);
}

.v-scroll .track span {
  width: 11px;
  height: 81%;
}

.h-scroll {
  display: flex;
  height: 17px;
  padding: 2px;
  border: 1px solid #000;
  border-top: 2px solid var(--aqua-dark);
  background: #86baba;
}

.h-scroll .track span {
  width: 83%;
  height: 11px;
  margin-left: auto;
}

.popup-hint {
  height: 23px;
  padding-right: 6px;
  border: 2px solid #cccca3;
  border-top-color: #99997a;
  border-left: 1px solid #99997a;
  background: var(--cream);
  font-size: 15px;
  font-weight: bold;
  line-height: 19px;
  text-align: center;
}

.popup-foot {
  padding: 2px;
  background: var(--aqua);
}

.popup-foot button {
  display: block;
  width: 100%;
  height: 23px;
  border: 2px solid var(--aqua-light);
  border-right-color: var(--aqua-dark);
  border-bottom-color: var(--aqua-dark);
  font-size: 15px;
  font-weight: bold;
  line-height: 19px;
}
</style>
